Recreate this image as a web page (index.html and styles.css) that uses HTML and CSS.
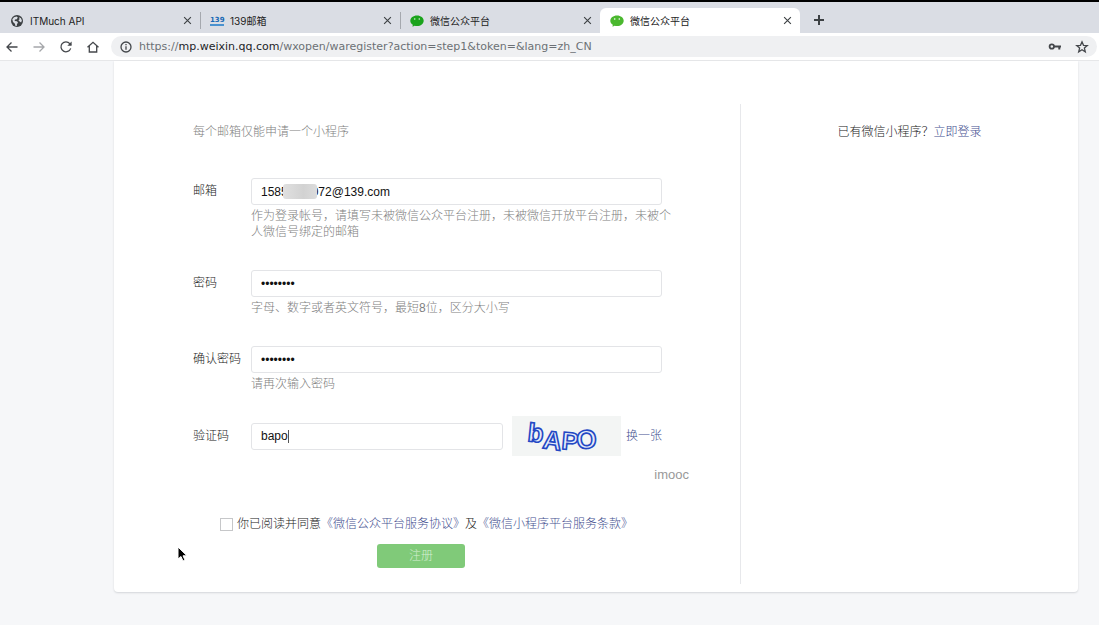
FILE: index.html
```html
<!DOCTYPE html>
<html lang="zh-CN">
<head>
<meta charset="utf-8">
<title>微信公众平台</title>
<link rel="stylesheet" href="styles.css">
</head>
<body>
<header class="browser">
  <nav class="tabs" aria-label="标签页">
    <div class="tab">
      <svg class="favicon" viewBox="0 0 14 14"><circle cx="7" cy="7" r="6" fill="#3c4043"/><path d="M2.3 5.2 4 3.2l2.6-.6 1.2 1-1 1.6-1.8.4-.4 1.3 2.4.4 1 1.4-1 1.2-.3 2-1.2.2-.6-2.4L3 8z" fill="#dadde4"/><path d="M9 3.2l2 1 .9 2.2-.8 2-1.5-.8-1.2-1.4 1.2-1z" fill="#dadde4"/></svg>
      <button class="tab-title">ITMuch API</button>
      <button class="close" aria-label="关闭"><svg viewBox="0 0 8 8"><path d="M1 1l6 6M7 1 1 7"/></svg></button>
    </div>
    <div class="tab">
      <span class="favicon brand">139</span>
      <button class="tab-title">139邮箱</button>
      <button class="close" aria-label="关闭"><svg viewBox="0 0 8 8"><path d="M1 1l6 6M7 1 1 7"/></svg></button>
    </div>
    <div class="tab">
      <svg class="favicon" viewBox="0 0 14 14"><path d="M7 1.400c3.800 0 6.700 2.300 6.700 5.300S10.800 12 7 12c-.8 0-1.600-.1-2.400-.3L2.500 12.800l.3-2C1.200 9.900.3 8.400.3 6.700.3 3.700 3.200 1.400 7 1.400z" fill="#1aa31c"/><circle cx="4.700" cy="5" r=".8" fill="#d5eed5"/><circle cx="9.300" cy="5" r=".8" fill="#d5eed5"/></svg>
      <button class="tab-title">微信公众平台</button>
      <button class="close" aria-label="关闭"><svg viewBox="0 0 8 8"><path d="M1 1l6 6M7 1 1 7"/></svg></button>
    </div>
    <div class="tab active">
      <svg class="favicon" viewBox="0 0 14 14"><path d="M7 1.400c3.800 0 6.700 2.300 6.700 5.300S10.800 12 7 12c-.8 0-1.600-.1-2.400-.3L2.500 12.800l.3-2C1.200 9.900.3 8.400.3 6.700.3 3.700 3.200 1.400 7 1.400z" fill="#4bb82f"/><circle cx="4.700" cy="5" r=".8" fill="#fff"/><circle cx="9.300" cy="5" r=".8" fill="#fff"/></svg>
      <button class="tab-title">微信公众平台</button>
      <button class="close" aria-label="关闭"><svg viewBox="0 0 8 8"><path d="M1 1l6 6M7 1 1 7"/></svg></button>
    </div>
    <button class="new-tab" aria-label="新标签页"><svg viewBox="0 0 12 12"><path d="M6 1v10M1 6h10"/></svg></button>
  </nav>
  <div class="toolbar">
    <div class="nav-buttons">
      <button class="nav" aria-label="后退"><svg viewBox="0 0 14 14"><path d="M12.500 7H2M6.500 2.500 2 7l4.500 4.500"/></svg></button>
      <button class="nav muted" aria-label="前进"><svg viewBox="0 0 14 14"><path d="M1.500 7H12M7.500 2.500 12 7l-4.500 4.500"/></svg></button>
      <button class="nav" aria-label="刷新"><svg viewBox="0 0 14 14"><path d="M11.700 8.400A5 5 0 1 1 10.800 3.600L12 4.800"/><path d="M12.600 1.500v4.300H8.300z" fill="#44474b" stroke="none"/></svg></button>
      <button class="nav" aria-label="主页"><svg viewBox="0 0 14 14"><path d="M1.500 7.300 7 2.300l5.500 5M3.300 6v6h7.400V6"/></svg></button>
    </div>
    <div class="address">
      <svg class="info" viewBox="0 0 14 14"><circle cx="7" cy="7" r="5"/><path d="M7 6.300v3.500M7 4v1.300"/></svg>
      <span class="url">https://<b>mp.weixin.qq.com</b>/wxopen/waregister?action=step1&amp;token=&amp;lang=zh_CN</span>
      <button class="nav" aria-label="密码"><svg viewBox="0 0 14 14"><circle cx="3.800" cy="6.500" r="2.200" stroke-width="1.800"/><path d="M6 6.500h7M11.300 6.500v3" stroke-width="2"/></svg></button>
      <button class="nav" aria-label="收藏"><svg viewBox="0 0 14 14"><path d="M7 1.800l1.500 3.500 3.800.3-2.900 2.500.9 3.700L7 9.800l-3.300 2 .9-3.700L1.700 5.600l3.800-.3z"/></svg></button>
    </div>
  </div>
</header>

<main class="page">
  <div class="card">
    <section class="register">
      <p class="intro">每个邮箱仅能申请一个小程序</p>
      <form class="form">
        <div class="row">
          <label class="label" for="email">邮箱</label>
          <div class="field">
            <div class="control">
              <input class="input" id="email" type="text" value="1585xxxx072@139.com">
              <span class="mask"></span>
            </div>
            <p class="hint">作为登录帐号，请填写未被微信公众平台注册，未被微信开放平台注册，未被个人微信号绑定的邮箱</p>
          </div>
        </div>
        <div class="row">
          <label class="label" for="password">密码</label>
          <div class="field">
            <input class="input" id="password" type="password" value="password">
            <p class="hint">字母、数字或者英文符号，最短8位，区分大小写</p>
          </div>
        </div>
        <div class="row">
          <label class="label" for="confirm">确认密码</label>
          <div class="field">
            <input class="input" id="confirm" type="password" value="password">
            <p class="hint">请再次输入密码</p>
          </div>
        </div>
        <div class="row captcha-row">
          <label class="label" for="code">验证码</label>
          <div class="captcha-field">
            <div class="control grow">
              <input class="input" id="code" type="text" value="bapo">
              <span class="caret"></span>
            </div>
            <svg class="captcha" viewBox="0 0 109 40" role="img" aria-label="bAPO">
              <g class="captcha-text">
                <text x="15" y="25" font-size="26" transform="rotate(6 15 25)">b</text>
                <text x="30" y="32" font-size="26" transform="rotate(8 30 32)">A</text>
                <text x="49" y="33" font-size="25" transform="rotate(5 49 33)">P</text>
                <text x="65" y="33" font-size="26" transform="rotate(-4 65 33)">O</text>
              </g>
            </svg>
            <a class="link" href="#">换一张</a>
          </div>
        </div>
        <div class="agreement">
          <input class="checkbox" id="agree" type="checkbox">
          <label for="agree">你已阅读并同意<a class="link" href="#">《微信公众平台服务协议》</a>及<a class="link" href="#">《微信小程序平台服务条款》</a></label>
        </div>
        <button class="submit" type="submit">注册</button>
      </form>
      <span class="watermark">imooc</span>
    </section>
    <aside class="login">已有微信小程序？<a class="link" href="#">立即登录</a></aside>
  </div>
</main>
<svg class="pointer" viewBox="0 0 12 18"><path d="M1 1v12l3-2.500 2 4.500 2-1-2-4.200h4z" fill="#000" stroke="#fff"/></svg>
</body>
</html>
```
FILE: styles.css
```css
* { box-sizing: border-box; }

body {
  margin: 0;
  min-height: 100vh;
  background: #f6f7f9;
  color: #222;
  font: 300 12px/16px "Liberation Sans", "Noto Sans CJK SC", sans-serif;
}

p { margin: 0; }
svg { display: block; }
button {
  padding: 0;
  border: 0;
  background: none;
  color: inherit;
  font: inherit;
}

/* Browser chrome */
.browser {
  border-top: 2px solid #000;
  border-bottom: 1px solid #e6e7e9;
  background: #fff;
}
.tabs {
  display: flex;
  align-items: flex-end;
  height: 31px;
  background: #dadde4;
}
.tab {
  position: relative;
  display: flex;
  align-items: center;
  flex: 0 1 200px;
  height: 25px;
  padding: 0 8px 0 10px;
  font: 10px/16px Inter, "Noto Sans CJK SC", sans-serif;
}
.tab + .tab:not(.active) {
  padding-left: 9px;
  border-left: 1px solid #a5a8ae;
  border-image: linear-gradient(transparent 20%, #a5a8ae 20%, #a5a8ae 80%, transparent 80%) 1;
}
.tab.active {
  border-radius: 6px 6px 0 0;
  background: #fff;
}
.favicon { flex: none; width: 14px; height: 14px; margin-right: 6px; }
.brand {
  height: 10px;
  border-bottom: 2px solid #4a92cf;
  color: #1769b5;
  font: bold 7px/8px "DejaVu Sans", sans-serif;
  text-align: center;
}
.tab-title { flex: 1; text-align: left; }
.close { width: 9px; height: 9px; }
.close svg, .new-tab svg { width: 100%; fill: none; stroke: #3c4043; }
.new-tab { width: 12px; height: 12px; margin: 0 0 7px 13px; }
.new-tab svg { stroke-width: 2; }

.toolbar {
  display: flex;
  align-items: center;
  height: 27px;
  padding-right: 2px;
  padding-left: 5px;
}
.nav-buttons { display: flex; gap: 13px; margin-right: 11px; }
.nav svg, .info {
  width: 14px;
  height: 14px;
  fill: none;
  stroke: #44474b;
  stroke-width: 1.3;
}
.nav.muted svg { stroke: #a5a7aa; }
.address {
  display: flex;
  align-items: center;
  flex: 1;
  gap: 13px;
  min-width: 0;
  height: 21px;
  padding: 0 8px;
  border-radius: 11px;
  background: #eff0f2;
}
.info { flex: none; margin-right: -7px; }
.url {
  flex: 1;
  overflow: hidden;
  color: #6c7075;
  font: 11px/16px "DejaVu Sans", sans-serif;
  white-space: nowrap;
}
.url b { color: #222427; font-weight: 400; }

/* Registration card */
.page { padding: 0 21px 32px 114px; }
.card {
  display: grid;
  grid-template-columns: minmax(0, 627fr) minmax(0, 337fr);
  padding: 43px 0 8px;
  border-radius: 0 0 4px 4px;
  background: #fff;
  box-shadow: 0 1px 2px #d3d5d9;
}
.register {
  position: relative;
  padding: 20px 78px 16px 79px;
  border-right: 1px solid #e7e8eb;
}
.login { padding-top: 20px; text-align: center; }
.intro { margin-bottom: 38px; color: #808080; }
.form { display: flex; flex-direction: column; gap: 30px; }
.row { display: flex; }
.label { flex: none; width: 58px; padding-top: 5px; }
.field { flex: 1; min-width: 0; }
.control { position: relative; }
.grow { flex: 1; min-width: 0; }
.input {
  display: block;
  width: 100%;
  height: 27px;
  padding: 0 9px;
  border: 1px solid #e3e4e7;
  border-radius: 3px;
  background: #fff;
  color: #111;
  font: 12px/16px "Liberation Sans", sans-serif;
}
.hint { margin: 3px -10px 0 0; color: #808080; }
.mask {
  position: absolute;
  top: 6px;
  left: 32px;
  width: 34px;
  height: 15px;
  border-radius: 3px;
  background: linear-gradient(90deg, #e0e0e0, #d2d2d2 60%, #dcdcdc);
}
.caret {
  position: absolute;
  top: 7px;
  left: 37px;
  width: 1px;
  height: 13px;
  background: #555;
}
.captcha-row { align-items: center; margin-top: -6px; }
.captcha-row .label { padding: 0; }
.captcha-field { display: flex; align-items: center; flex: 1; min-width: 0; }
.captcha {
  width: 109px;
  height: 40px;
  margin: 0 5px 0 9px;
  background: #f3f5f4;
}
.captcha-text {
  fill: #e6edfa;
  stroke: #2348c4;
  stroke-width: 1.6;
  font-family: "Liberation Sans", sans-serif;
  font-weight: 700;
}
.link { color: #44508f; text-decoration: none; }
.agreement {
  display: flex;
  align-items: center;
  gap: 4px;
  margin: 30px 0 0 27px;
  white-space: nowrap;
}
.checkbox {
  appearance: none;
  flex: none;
  width: 13px;
  height: 13px;
  margin: 0;
  border: 1px solid #c6c7c9;
  background: #fff;
}
.submit {
  align-self: center;
  width: 88px;
  height: 24px;
  margin: -18px 13px 0 0;
  border-radius: 3px;
  background: #80ca79;
  color: #d5efd2;
}
.watermark {
  position: absolute;
  right: 51px;
  bottom: 101px;
  color: #999;
  font: 13px/16px "Liberation Sans", sans-serif;
}
.pointer {
  position: absolute;
  top: 546px;
  left: 177px;
  width: 12px;
  height: 18px;
}
```
